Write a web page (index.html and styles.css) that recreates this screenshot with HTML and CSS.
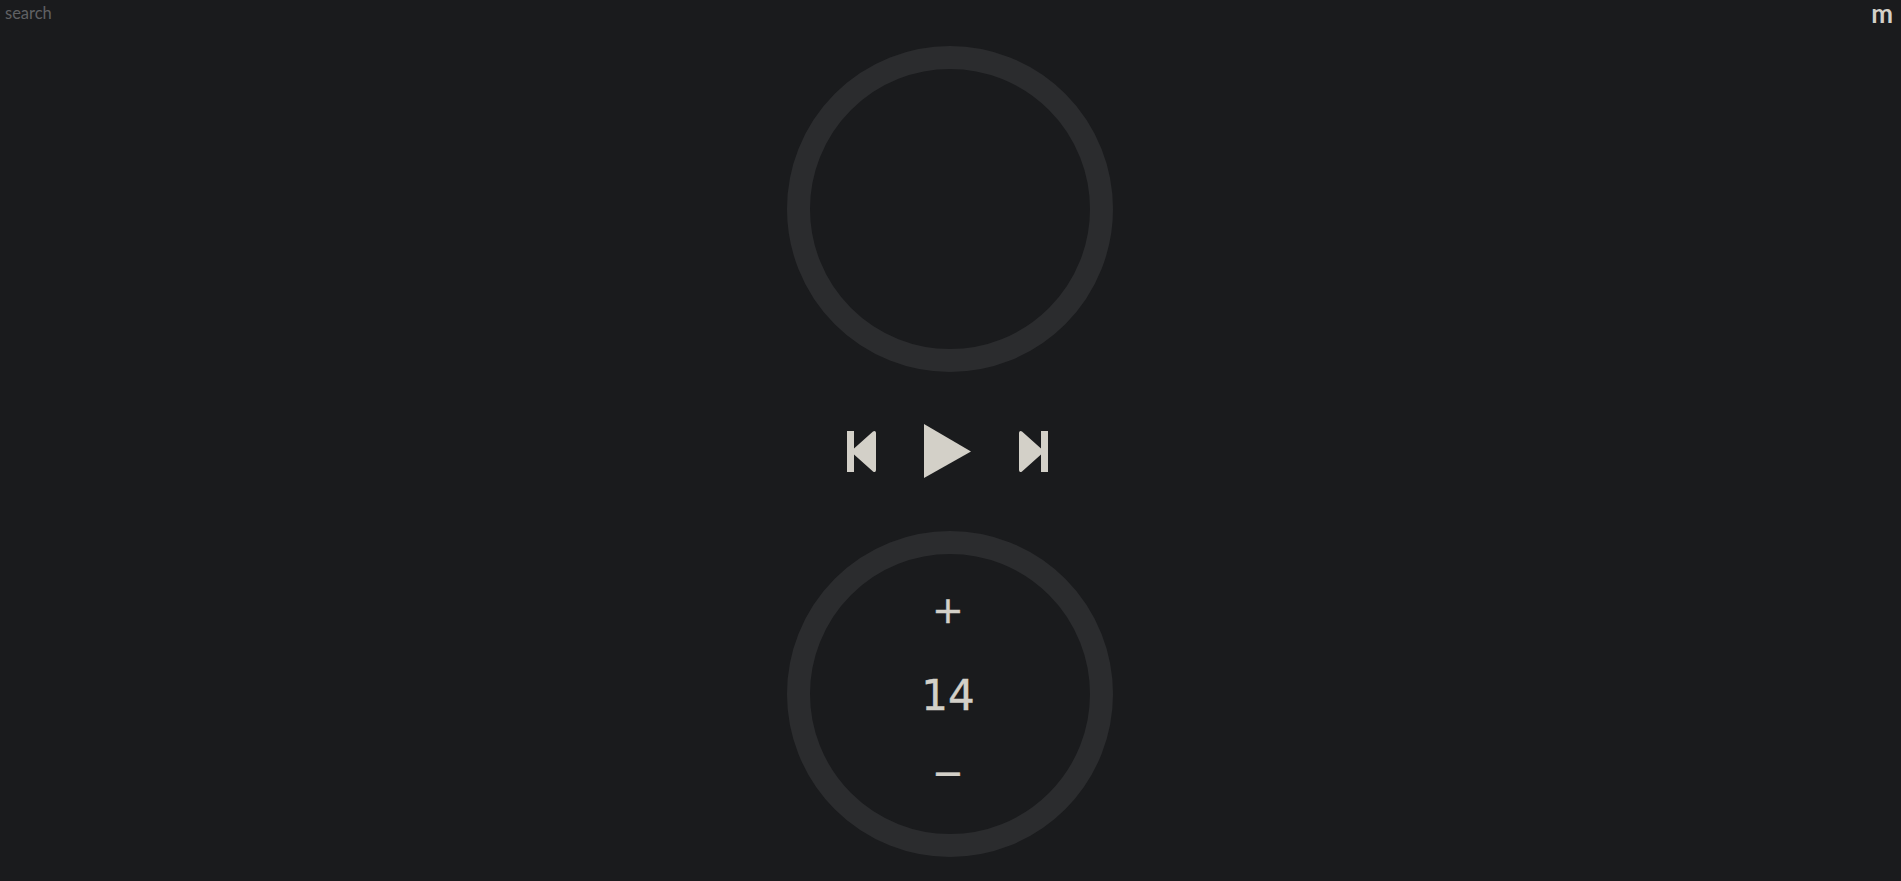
FILE: index.html
```html
<!DOCTYPE html>
<html lang="en">
<head>
    <meta charset="UTF-8">
    <meta name="viewport" content="width=device-width, initial-scale=1.0">
    <title>Player</title>
    <link rel="stylesheet" href="styles.css">
</head>
<body>

    <header class="top-bar">
        <input class="search" type="text" placeholder="search">
        <div class="menu-btn">m</div>
    </header>

    <main class="player">
        <!-- Cover art ring -->
        <div class="ring"></div>

        <!-- Transport controls -->
        <div class="controls">
            <svg class="icon-skip" viewBox="0 0 29 41">
                <path d="M0 0H7V17.5L26 0.5Q27.5 -0.5 28.5 0.5Q29 1 29 2.5V38.5Q29 40 28.5 40.5Q27.5 41.5 26 40.5L7 23.5V41H0Z"/>
            </svg>
            <svg class="icon-play" viewBox="0 0 47 54">
                <path d="M0 0L47 27.5L0 54Z"/>
            </svg>
            <svg class="icon-skip" viewBox="0 0 29 41">
                <path d="M29 0H22V17.5L3 0.5Q1.5 -0.5 0.5 0.5Q0 1 0 2.5V38.5Q0 40 0.5 40.5Q1.5 41.5 3 40.5L22 23.5V41H29Z"/>
            </svg>
        </div>

        <!-- Volume ring -->
        <div class="ring volume">
            <div class="vol-btn">+</div>
            <div class="vol-value">14</div>
            <div class="vol-btn">−</div>
        </div>
    </main>

</body>
</html>
```

FILE: styles.css
```css
body {
    margin: 0;
    height: 881px;
    overflow: hidden;
    background-color: #1a1b1d;
    color: #d3d0c8;
    font-family: Lato, sans-serif;
}

.top-bar {
    display: flex;
    justify-content: space-between;
    align-items: flex-start;
    height: 46px;
}

.search {
    width: 200px;
    padding: 3px 5px;
    border: none;
    outline: none;
    background: transparent;
    color: #d3d0c8;
    font-family: Lato, sans-serif;
    font-size: 16.5px;
}

.search::placeholder {
    color: #606164;
    opacity: 1;
}

.menu-btn {
    padding-right: 8px;
    font-size: 26px;
    font-weight: 700;
    line-height: 27px;
}

.player {
    display: flex;
    flex-direction: column;
    align-items: center;
    padding-right: 2px;
}

.ring {
    box-sizing: border-box;
    width: 326px;
    height: 326px;
    border: 23px solid #2b2c2e;
    border-radius: 50%;
}

.controls {
    display: flex;
    align-items: center;
    gap: 48px;
    height: 54px;
    margin: 52px 5px 53px 0;
}

.controls svg {
    display: block;
    overflow: visible;
    fill: #d3d0c8;
}

.icon-skip {
    width: 29px;
    height: 41px;
}

.icon-play {
    width: 47px;
    height: 54px;
}

.volume {
    display: flex;
    flex-direction: column;
    align-items: center;
    justify-content: center;
    padding: 0 3px 6px 0;
    font-family: "DejaVu Sans", sans-serif;
    -webkit-text-stroke: 0.4px #d3d0c8;
}

.vol-btn {
    font-size: 38px;
    line-height: 50px;
}

.vol-value {
    margin: 36px 0 27px;
    font-size: 42px;
    line-height: 50px;
}
```
